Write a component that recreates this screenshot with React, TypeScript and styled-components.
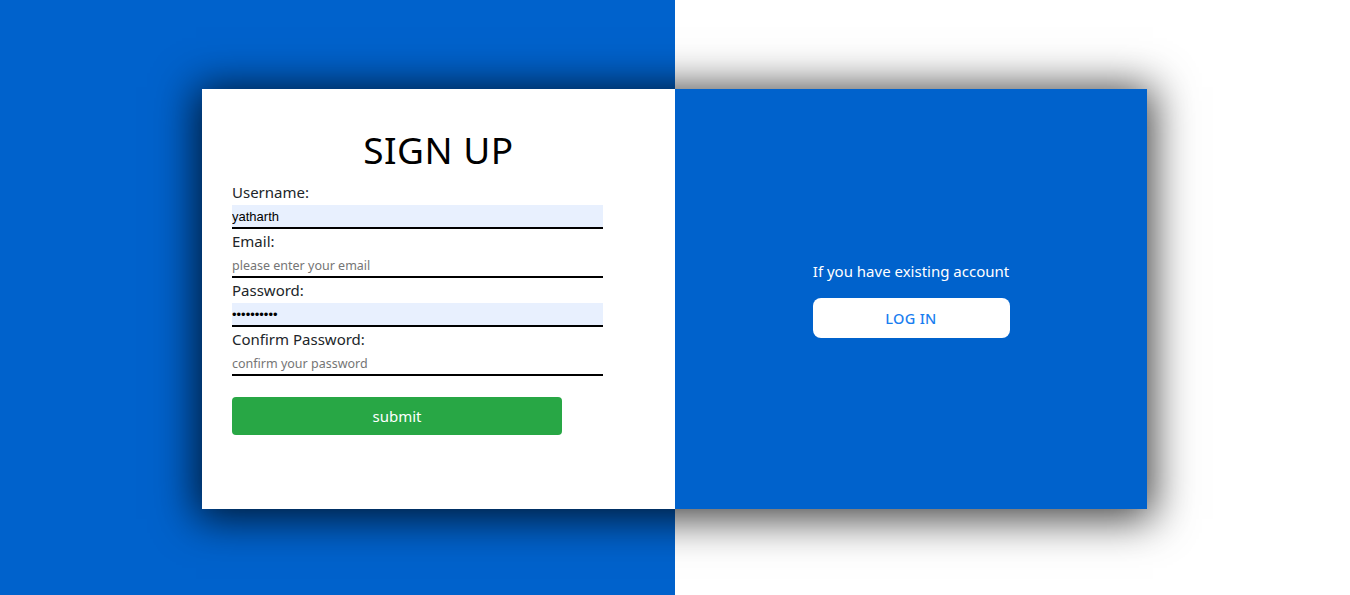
import React from "react";
import styled, { createGlobalStyle } from "styled-components";

const Global = createGlobalStyle`
  html, body { margin: 0; padding: 0; }
  body {
    font-family: "Noto Sans", "Open Sans", sans-serif;
    background: linear-gradient(to right, #0062cc 675px, #ffffff 675px);
    min-height: 595px;
  }
  * { box-sizing: border-box; }
`;

const Page = styled.div`
  width: 1349px;
  height: 595px;
  display: flex;
  align-items: center;
  justify-content: center;
  padding-top: 3px;
`;

const Card = styled.div`
  width: 945px;
  height: 420px;
  display: flex;
  box-shadow: 0 4px 40px 6px rgba(0, 0, 0, 0.75);
`;

const FormPanel = styled.div`
  width: 473px;
  background: #ffffff;
  padding: 35px 30px 0 30px;
`;

const Title = styled.h1`
  margin: 0 0 4px 0;
  text-align: center;
  font-weight: 400;
  font-size: 37px;
  line-height: 52px;
  color: #000;
  letter-spacing: 0.5px;
`;

const Form = styled.form`
  width: 371px;
  display: flex;
  flex-direction: column;
`;

const Label = styled.label`
  display: block;
  font-size: 15px;
  line-height: 24px;
  height: 25px;
  color: #212529;
`;

const Input = styled.input<{ $filled?: boolean }>`
  display: block;
  width: 100%;
  height: 24px;
  margin: 0;
  padding: 0;
  border: none;
  border-bottom: 2px solid #000;
  outline: none;
  background: ${(p) => (p.$filled ? "#e8f0fe" : "#ffffff")};
  font-family: ${(p) => (p.$filled ? '"Liberation Sans", Arial, sans-serif' : '"Noto Sans", sans-serif')};
  font-size: 13px;
  color: #000;
  &::placeholder {
    color: #757575;
    font-family: "Noto Sans", sans-serif;
    font-size: 12.5px;
  }
`;

const Submit = styled.button`
  margin-top: 21px;
  width: 330px;
  height: 38px;
  border: none;
  border-radius: 4px;
  background: #28a745;
  color: #fff;
  font-family: "Noto Sans", sans-serif;
  font-size: 15px;
  cursor: pointer;
`;

const InfoPanel = styled.div`
  width: 472px;
  background: #0062cc;
  display: flex;
  flex-direction: column;
  align-items: center;
  justify-content: center;
`;

const InfoText = styled.p`
  margin: 0 0 17px 0;
  color: #fff;
  font-size: 15px;
  line-height: 20px;
`;

const LoginButton = styled.button`
  width: 197px;
  height: 40px;
  border: none;
  border-radius: 8px;
  background: #fff;
  color: #1a7ef0;
  font-family: "Noto Sans", sans-serif;
  font-size: 14.5px;
  font-weight: 500;
  letter-spacing: 0.3px;
  cursor: pointer;
`;

export default function App() {
  return (
    <>
      <Global />
      <Page>
        <Card>
          <FormPanel>
            <Title>SIGN UP</Title>
            <Form onSubmit={(e) => e.preventDefault()}>
              <Label>Username:</Label>
              <Input $filled type="text" defaultValue="yatharth" />
              <Label>Email:</Label>
              <Input type="email" placeholder="please enter your email" />
              <Label>Password:</Label>
              <Input $filled type="password" defaultValue="yatharth12" />
              <Label>Confirm Password:</Label>
              <Input type="password" placeholder="confirm your password" />
              <Submit type="submit">submit</Submit>
            </Form>
          </FormPanel>
          <InfoPanel>
            <InfoText>If you have existing account</InfoText>
            <LoginButton>LOG IN</LoginButton>
          </InfoPanel>
        </Card>
      </Page>
    </>
  );
}
